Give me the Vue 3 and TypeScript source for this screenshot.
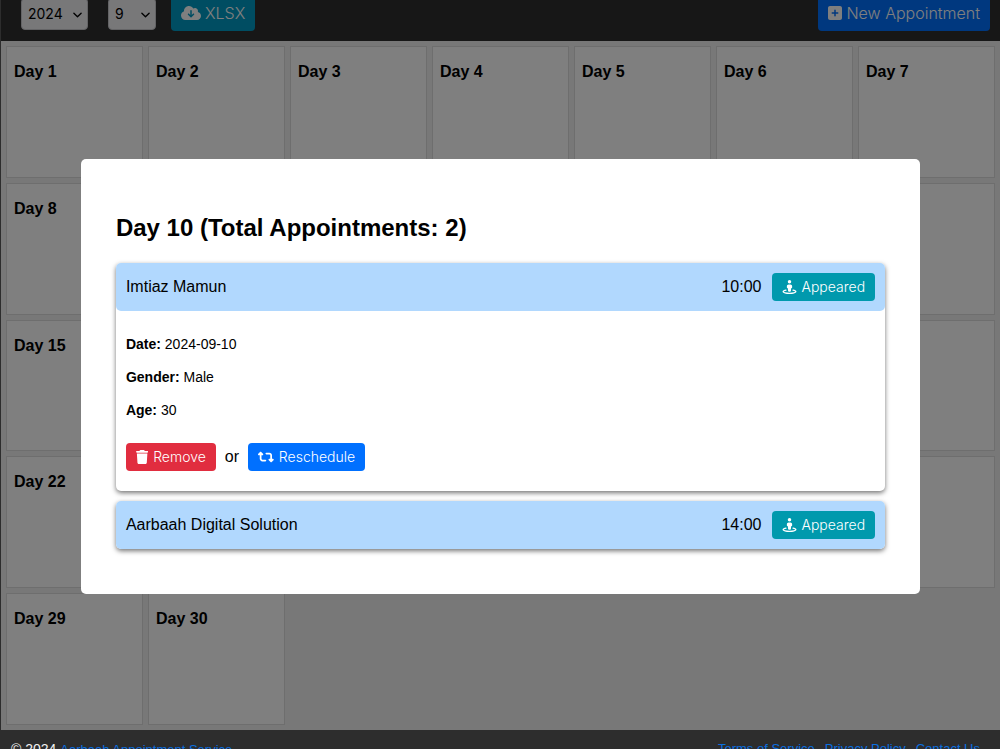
<script setup lang="ts">
import { ref } from 'vue'

interface Appointment {
  name: string
  time: string
  open: boolean
  details: { label: string; value: string }[]
}

const year = ref('2024')
const month = ref('9')
const days = Array.from({ length: 30 }, (_, i) => i + 1)

const appointments = ref<Appointment[]>([
  {
    name: 'Imtiaz Mamun',
    time: '10:00',
    open: true,
    details: [
      { label: 'Date', value: '2024-09-10' },
      { label: 'Gender', value: 'Male' },
      { label: 'Age', value: '30' },
    ],
  },
  { name: 'Aarbaah Digital Solution', time: '14:00', open: false, details: [] },
])
</script>

<template>
  <div class="page">
    <header class="toolbar">
      <div class="picker year">
        <select v-model="year" aria-label="Year">
          <option>2023</option>
          <option>2024</option>
          <option>2025</option>
        </select>
        <svg class="chevron" viewBox="0 0 10 6"><path d="M1 1l4 4 4-4" /></svg>
      </div>
      <div class="picker month">
        <select v-model="month" aria-label="Month">
          <option v-for="m in 12" :key="m" :value="String(m)">{{ m }}</option>
        </select>
        <svg class="chevron" viewBox="0 0 10 6"><path d="M1 1l4 4 4-4" /></svg>
      </div>
      <button class="btn large export" type="button">
        <svg class="icon cloud" viewBox="0 0 640 512">
          <path d="M144 480C64.500 480 0 415.500 0 336c0-62.800 40.200-116.200 96.200-135.900-.1-2.700-.2-5.400-.2-8.100 0-88.400 71.600-160 160-160 59.300 0 111 32.200 138.700 80.200C409.900 102 428.300 96 448 96c53 0 96 43 96 96 0 12.200-2.300 23.800-6.400 34.600C596 238.400 640 290.100 640 352c0 70.700-57.300 128-128 128H144zm79-167l80 80c9.400 9.400 24.600 9.400 33.900 0l80-80c9.400-9.400 9.400-24.600 0-33.900s-24.600-9.400-33.900 0l-39 39V184c0-13.300-10.700-24-24-24s-24 10.700-24 24v134.100l-39-39c-9.400-9.400-24.600-9.400-33.900 0s-9.400 24.600 0 33.900z" />
        </svg>
        XLSX
      </button>
      <button class="btn large primary new" type="button">
        <svg class="icon square" viewBox="0 0 448 512">
          <path d="M64 32C28.700 32 0 60.700 0 96v320c0 35.300 28.700 64 64 64h320c35.300 0 64-28.700 64-64V96c0-35.300-28.700-64-64-64H64zm136 312v-64h-64c-13.300 0-24-10.700-24-24s10.700-24 24-24h64v-64c0-13.300 10.700-24 24-24s24 10.700 24 24v64h64c13.300 0 24 10.700 24 24s-10.700 24-24 24h-64v64c0 13.300-10.700 24-24 24s-24-10.700-24-24z" />
        </svg>
        New Appointment
      </button>
    </header>

    <main class="calendar">
      <section v-for="day in days" :key="day" class="day">
        <h3>Day {{ day }}</h3>
      </section>
    </main>

    <div class="overlay">
      <div class="modal" role="dialog" aria-modal="true" aria-labelledby="modal-title">
        <h2 id="modal-title">Day 10 (Total Appointments: {{ appointments.length }})</h2>
        <article v-for="item in appointments" :key="item.name" class="card">
          <div class="card-head" @click="item.open = !item.open">
            <span class="name">{{ item.name }}</span>
            <span>{{ item.time }}</span>
            <button class="btn info" type="button" @click.stop>
              <svg class="icon view" viewBox="0 0 512 512">
                <path d="M320 64a64 64 0 1 0-128 0 64 64 0 1 0 128 0zm-96 96c-35.300 0-64 28.700-64 64v48c0 17.700 14.300 32 32 32h1.800l11.100 99.500c1.800 16.200 15.500 28.500 31.800 28.500h38.700c16.300 0 30-12.300 31.800-28.500L318.200 304h1.800c17.700 0 32-14.300 32-32v-48c0-35.300-28.700-64-64-64h-64zM132.300 394.200c13-2.400 21.700-14.900 19.300-27.900s-14.900-21.700-27.900-19.300c-32.400 5.900-60.900 14.200-82 24.800-10.500 5.300-20.300 11.700-27.800 19.600C6.400 399.500 0 410.500 0 424c0 21.400 15.500 36.100 29.100 45 14.700 9.600 34.300 17.300 56.400 23.400C130.200 504.700 190.400 512 256 512s125.800-7.300 170.400-19.600c22.100-6.100 41.800-13.800 56.400-23.400C496.500 460.100 512 445.400 512 424c0-13.500-6.400-24.500-14-32.600-7.500-7.900-17.300-14.300-27.800-19.600-21-10.600-49.500-18.900-82-24.800-13-2.400-25.500 6.300-27.900 19.300s6.300 25.500 19.300 27.900c30.200 5.500 53.700 12.800 69 20.500 3.200 1.600 5.800 3.100 7.900 4.500 3.600 2.400 3.600 7.200 0 9.600-8.800 5.700-23.100 11.800-43 17.300C374.300 457 318.500 464 256 464s-118.300-7-157.700-17.900c-19.900-5.500-34.200-11.600-43-17.300-3.600-2.400-3.600-7.200 0-9.600 2.100-1.400 4.800-2.900 7.900-4.500 15.300-7.700 38.800-14.900 69-20.500z" />
              </svg>
              Appeared
            </button>
          </div>
          <div v-if="item.open" class="card-body">
            <p v-for="row in item.details" :key="row.label">
              <strong>{{ row.label }}:</strong> {{ row.value }}
            </p>
            <div class="actions">
              <button class="btn danger" type="button">
                <svg class="icon trash" viewBox="0 0 448 512">
                  <path d="M135.200 17.700L128 32H32C14.300 32 0 46.300 0 64s14.300 32 32 32h384c17.700 0 32-14.300 32-32s-14.300-32-32-32h-96l-7.200-14.300C307.400 6.800 296.300 0 284.200 0H163.800c-12.100 0-23.200 6.800-28.600 17.700zM416 128H32l21.200 339c1.600 25.300 22.600 45 47.900 45h245.800c25.300 0 46.300-19.700 47.900-45L416 128z" />
                </svg>
                Remove
              </button>
              <span>or</span>
              <button class="btn primary" type="button">
                <svg class="icon turn" viewBox="0 0 576 512">
                  <path d="M272 416c17.700 0 32-14.300 32-32s-14.300-32-32-32H160c-17.700 0-32-14.300-32-32V192h32c12.900 0 24.600-7.800 29.600-19.800s2.200-25.700-6.900-34.900l-64-64c-12.500-12.500-32.800-12.500-45.300 0l-64 64c-9.200 9.200-11.900 22.900-6.900 34.900S19.100 192 32 192h32v128c0 53 43 96 96 96h112zM304 96c-17.700 0-32 14.300-32 32s14.300 32 32 32h112c17.700 0 32 14.300 32 32v128h-32c-12.900 0-24.600 7.800-29.600 19.800s-2.200 25.700 6.900 34.900l64 64c12.500 12.500 32.800 12.500 45.300 0l64-64c9.200-9.200 11.900-22.900 6.900-34.900S556.900 320 544 320h-32V192c0-53-43-96-96-96H304z" />
                </svg>
                Reschedule
              </button>
            </div>
          </div>
        </article>
      </div>
    </div>

    <footer class="footer">
      <span class="copy">© 2024 <a href="#">Aarbaah Appointment Service</a></span>
      <nav>
        <a href="#">Terms of Service</a>
        <a href="#">Privacy Policy</a>
        <a href="#">Contact Us</a>
      </nav>
    </footer>
  </div>
</template>

<style>
body {
  margin: 0;
}
</style>

<style scoped>
* {
  box-sizing: border-box;
}
.page {
  display: flex;
  flex-direction: column;
  height: 100vh;
  overflow: hidden;
  padding-left: 1px;
  background: #2d2d2d;
  color: #000;
  font-family: "Liberation Sans", Arial, sans-serif;
  font-size: 16px;
}
.toolbar {
  flex: 0 0 41px;
  display: flex;
  align-items: flex-end;
  overflow: hidden;
  padding: 0 10px 10px 20px;
  background: #2e2e2e;
}
.picker {
  position: relative;
  margin-bottom: 1px;
}
.year {
  width: 67px;
  margin-right: 20px;
}
.month {
  width: 48px;
  margin-right: 15px;
}
.picker select {
  appearance: none;
  display: block;
  width: 100%;
  height: 32px;
  padding: 0 6px 1px;
  border: 1px solid #c8c8cc;
  border-radius: 4px;
  background: #f0f0f3;
  color: #000;
  font: 14px Inter, sans-serif;
}
.chevron {
  position: absolute;
  right: 6px;
  top: 14px;
  width: 9px;
  height: 6px;
  fill: none;
  stroke: #000;
  stroke-width: 1.5;
  stroke-linecap: round;
  stroke-linejoin: round;
  pointer-events: none;
}
.btn {
  display: inline-flex;
  align-items: center;
  gap: 5px;
  height: 28px;
  padding: 0 10px 1px;
  border: 0;
  border-radius: 4px;
  color: #fff;
  font: 300 14px Inter, sans-serif;
  white-space: nowrap;
  cursor: pointer;
}
.btn.large {
  gap: 4px;
  height: 34px;
  padding-bottom: 2px;
  font-size: 16px;
}
.info {
  background: #0099ad;
}
.export {
  background: #009ac4;
}
.primary {
  background: #0070ff;
}
.danger {
  background: #e12d3f;
}
.new {
  margin-left: auto;
}
.icon {
  flex: none;
  height: 14px;
  fill: currentColor;
}
.view {
  width: 15px;
}
.large .icon {
  height: 16px;
}
.calendar {
  flex: 1;
  display: grid;
  grid-template-columns: repeat(7, 1fr);
  grid-auto-rows: minmax(80px, 1fr);
  gap: 5px;
  padding: 5px;
  background: #f0f0f0;
}
.day {
  padding: 16px 7px;
  border: 1px solid #ddd;
  background: #fff;
}
.day h3 {
  margin: 0;
  font-size: 16px;
  line-height: 18px;
}
.overlay {
  position: fixed;
  inset: 0 0 0 1px;
  display: flex;
  align-items: center;
  justify-content: center;
  padding-top: 4px;
  background: rgba(0, 0, 0, 0.5);
}
.modal {
  width: 84%;
  padding: 35px;
  border-radius: 5px;
  background: #fff;
}
.modal h2 {
  margin: 20px 0 21px;
  font-size: 24px;
  line-height: 28px;
}
.card {
  margin-bottom: 10px;
  border-radius: 5px;
  background: #fff;
  box-shadow: 0 2px 5px rgba(0, 0, 0, 0.55);
}
.card-head {
  display: flex;
  align-items: center;
  gap: 10px;
  padding: 10px;
  border-radius: 5px;
  background: #b1d8fe;
  cursor: pointer;
}
.name {
  flex: 1;
}
.card-body {
  padding: 25px 10px 20px;
}
.card-body p {
  margin: 0 0 16px;
  font-size: 14px;
  line-height: 17px;
}
.actions {
  display: flex;
  align-items: center;
  gap: 9px;
  padding-top: 8px;
}
.footer {
  position: relative;
  z-index: 1;
  flex: 0 0 19px;
  display: flex;
  justify-content: space-between;
  overflow: hidden;
  padding: 7px 20px 0 10px;
  background: #2d2d2d;
  color: #f0f0f0;
  font-size: 14px;
  line-height: 24px;
}
.footer a {
  color: #0a6fe0;
  font-size: 13px;
  text-decoration: none;
}
.footer nav {
  display: flex;
  gap: 10px;
}
</style>
